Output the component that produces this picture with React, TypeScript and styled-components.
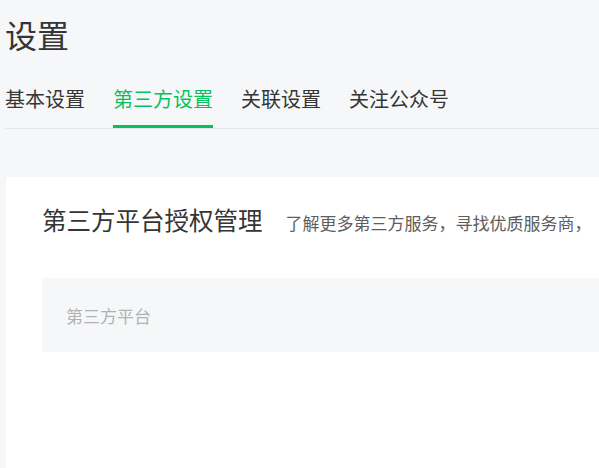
import React from "react";
import styled, { createGlobalStyle } from "styled-components";

const GlobalStyle = createGlobalStyle`
  html, body {
    margin: 0;
    padding: 0;
    background: #f6f7f9;
    overflow: hidden;
  }
  body {
    font-family: "Noto Sans CJK SC", "Noto Sans", sans-serif;
    color: #353535;
  }
`;

const Page = styled.div`
  width: 1100px;
  padding-left: 5px;
`;

const PageTitle = styled.h1`
  margin: 18px 0 0;
  font-size: 32px;
  line-height: 32px;
  font-weight: 400;
  color: #353535;
`;

const TabBar = styled.nav`
  display: flex;
  gap: 28px;
  margin-top: 39px;
  border-bottom: 1px solid #e4e6e9;
`;

const Tab = styled.div<{ $active?: boolean }>`
  font-size: 20px;
  line-height: 20px;
  padding-bottom: 16px;
  border-bottom: 3px solid ${(p) => (p.$active ? "#07c160" : "transparent")};
  color: ${(p) => (p.$active ? "#07c160" : "#353535")};
  white-space: nowrap;
`;

const Card = styled.section`
  margin: 48px 0 0 1px;
  background: #ffffff;
  padding: 30px 36px 120px;
  border-radius: 2px;
`;

const CardHeader = styled.div`
  display: flex;
  align-items: baseline;
  gap: 23px;
  white-space: nowrap;
`;

const CardTitle = styled.h2`
  margin: 0;
  font-size: 24.5px;
  line-height: 25px;
  font-weight: 400;
  color: #353535;
`;

const CardDesc = styled.span`
  font-size: 17px;
  color: #5e5e5e;
`;

const TableHead = styled.div`
  margin-top: 43px;
  height: 74px;
  display: flex;
  align-items: center;
  padding-left: 24px;
  background: #f6f7f9;
`;

const HeadCell = styled.div`
  font-size: 17px;
  color: #b2b2b2;
`;

export default function App() {
  const tabs = ["基本设置", "第三方设置", "关联设置", "关注公众号"];
  return (
    <>
      <GlobalStyle />
      <Page>
        <PageTitle>设置</PageTitle>
        <TabBar>
          {tabs.map((t, i) => (
            <Tab key={t} $active={i === 1}>
              {t}
            </Tab>
          ))}
        </TabBar>
        <Card>
          <CardHeader>
            <CardTitle>第三方平台授权管理</CardTitle>
            <CardDesc>了解更多第三方服务，寻找优质服务商，</CardDesc>
          </CardHeader>
          <TableHead>
            <HeadCell>第三方平台</HeadCell>
          </TableHead>
        </Card>
      </Page>
    </>
  );
}
